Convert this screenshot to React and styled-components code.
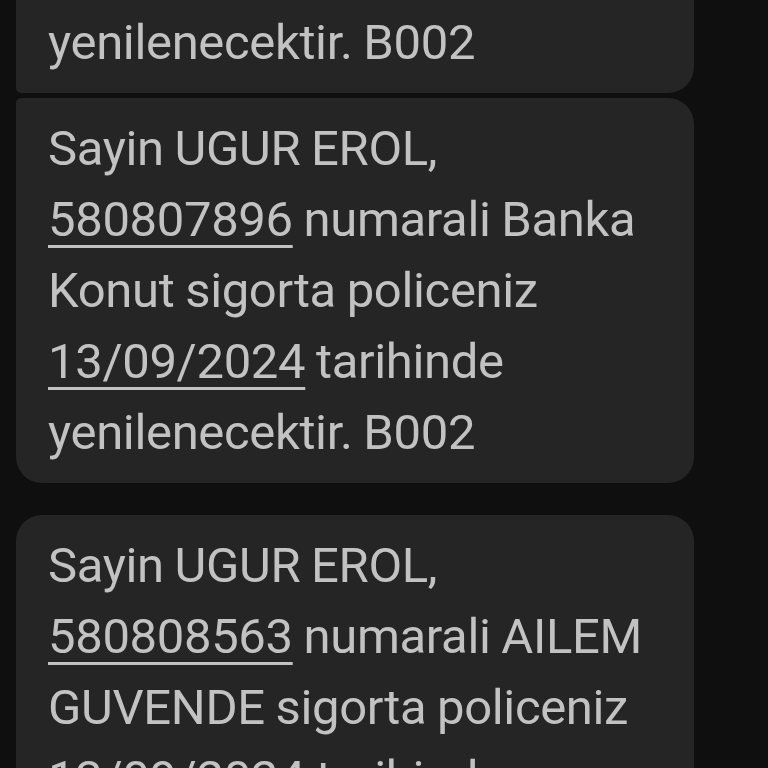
import React from "react";
import styled, { createGlobalStyle } from "styled-components";

const Global = createGlobalStyle`
  html, body { margin: 0; padding: 0; background: #0f0f0f; }
  body { font-family: Roboto, "Noto Sans", "Liberation Sans", sans-serif; }
`;

const Viewport = styled.div`
  width: 768px;
  height: 768px;
  overflow: hidden;
  background: #0f0f0f;
`;

const Thread = styled.div`
  display: flex;
  flex-direction: column;
  padding: 0 74px 0 16px;
  margin-top: -292px;
`;

const Group = styled.div`
  display: flex;
  flex-direction: column;
  gap: 5px;
  margin-bottom: ${(p) => p.$gapAfter || 0}px;
`;

const Bubble = styled.div`
  box-sizing: border-box;
  width: 678px;
  background: #252525;
  color: #c2c2c2;
  font-size: 49px;
  line-height: 71px;
  letter-spacing: -0.35px;
  word-spacing: -1px;
  padding: 15px 32px;
  border-radius: ${(p) => p.$tl}px 26px 26px ${(p) => p.$bl}px;
  white-space: nowrap;
`;

const Link = styled.span`
  text-decoration: underline;
  text-decoration-thickness: 3px;
  text-underline-offset: 9px;
`;

const messages = [
  { num: "580807895", lines: ["numarali Banka", "Konut sigorta policeniz"], tl: 26, bl: 5 },
  { num: "580807896", lines: ["numarali Banka", "Konut sigorta policeniz"], tl: 5, bl: 26 },
];

function Message({ num, first, second, tl, bl }) {
  return (
    <Bubble $tl={tl} $bl={bl}>
      Sayin UGUR EROL,
      <br />
      <Link>{num}</Link> {first}
      <br />
      {second}
      <br />
      <Link>13/09/2024</Link> tarihinde
      <br />
      yenilenecektir. B002
    </Bubble>
  );
}

export default function App() {
  return (
    <>
      <Global />
      <Viewport>
        <Thread>
          <Group $gapAfter={32}>
            {messages.map((m) => (
              <Message key={m.num} num={m.num} first={m.lines[0]} second={m.lines[1]} tl={m.tl} bl={m.bl} />
            ))}
          </Group>
          <Group>
            <Message
              num="580808563"
              first="numarali AILEM"
              second="GUVENDE sigorta policeniz"
              tl={26}
              bl={26}
            />
          </Group>
        </Thread>
      </Viewport>
    </>
  );
}
